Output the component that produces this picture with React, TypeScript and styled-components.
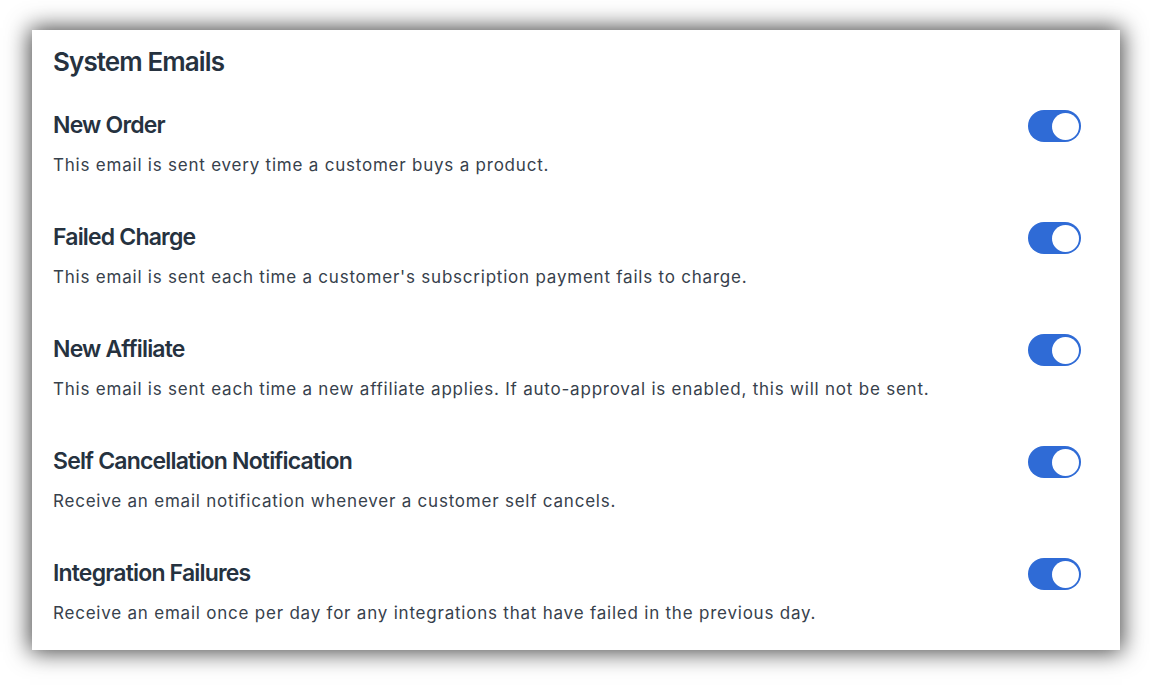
import React, { useState } from "react";
import styled, { createGlobalStyle } from "styled-components";

const Global = createGlobalStyle`
  html, body { margin: 0; padding: 0; background: #ffffff; }
  body { font-family: Inter, "Noto Sans", sans-serif; -webkit-font-smoothing: antialiased; }
  * { box-sizing: border-box; }
`;

const Page = styled.div`
  padding: 30px 30px 38px 32px;
  width: 1150px;
  height: 688px;
`;

const Card = styled.section`
  width: 1088px;
  height: 620px;
  background: #ffffff;
  box-shadow: 0 0 22px 2px rgba(0, 0, 0, 0.75);
  padding: 16px 39px 0 21px;
  display: flex;
  flex-direction: column;
`;

const Title = styled.h1`
  margin: 0 0 33px 0;
  font-size: 26px;
  line-height: 32px;
  font-weight: 600;
  letter-spacing: -0.9px;
  color: #26323f;
`;

const List = styled.div`
  display: flex;
  flex-direction: column;
  gap: 45px;
`;

const Row = styled.div`
  display: flex;
  align-items: flex-start;
  justify-content: space-between;
`;

const Text = styled.div`
  display: flex;
  flex-direction: column;
  gap: 13px;
`;

const Heading = styled.h2`
  margin: 0;
  font-size: 23px;
  line-height: 28px;
  font-weight: 600;
  letter-spacing: -0.82px;
  color: #26323f;
`;

const Desc = styled.p`
  margin: 0;
  font-size: 17px;
  line-height: 26px;
  font-weight: 400;
  letter-spacing: 0.78px;
  color: #37414c;
`;

const Switch = styled.button<{ $on: boolean }>`
  width: 53px;
  height: 32px;
  border: none;
  padding: 2.5px;
  border-radius: 16px;
  background: ${(p) => (p.$on ? "#2f6bd6" : "#c9ced6")};
  display: flex;
  justify-content: ${(p) => (p.$on ? "flex-end" : "flex-start")};
  align-items: center;
  cursor: pointer;
  margin-top: -1px;
`;

const Knob = styled.span`
  width: 27px;
  height: 27px;
  border-radius: 50%;
  background: #ffffff;
`;

const items = [
  { title: "New Order", desc: "This email is sent every time a customer buys a product." },
  { title: "Failed Charge", desc: "This email is sent each time a customer's subscription payment fails to charge." },
  {
    title: "New Affiliate",
    desc: "This email is sent each time a new affiliate applies. If auto-approval is enabled, this will not be sent.",
  },
  { title: "Self Cancellation Notification", desc: "Receive an email notification whenever a customer self cancels." },
  {
    title: "Integration Failures",
    desc: "Receive an email once per day for any integrations that have failed in the previous day.",
  },
];

export default function App() {
  const [state, setState] = useState(items.map(() => true));
  return (
    <Page>
      <Global />
      <Card>
        <Title>System Emails</Title>
        <List>
          {items.map((it, i) => (
            <Row key={it.title}>
              <Text>
                <Heading>{it.title}</Heading>
                <Desc>{it.desc}</Desc>
              </Text>
              <Switch
                $on={state[i]}
                aria-label={it.title}
                onClick={() => setState((s) => s.map((v, j) => (j === i ? !v : v)))}
              >
                <Knob />
              </Switch>
            </Row>
          ))}
        </List>
      </Card>
    </Page>
  );
}
